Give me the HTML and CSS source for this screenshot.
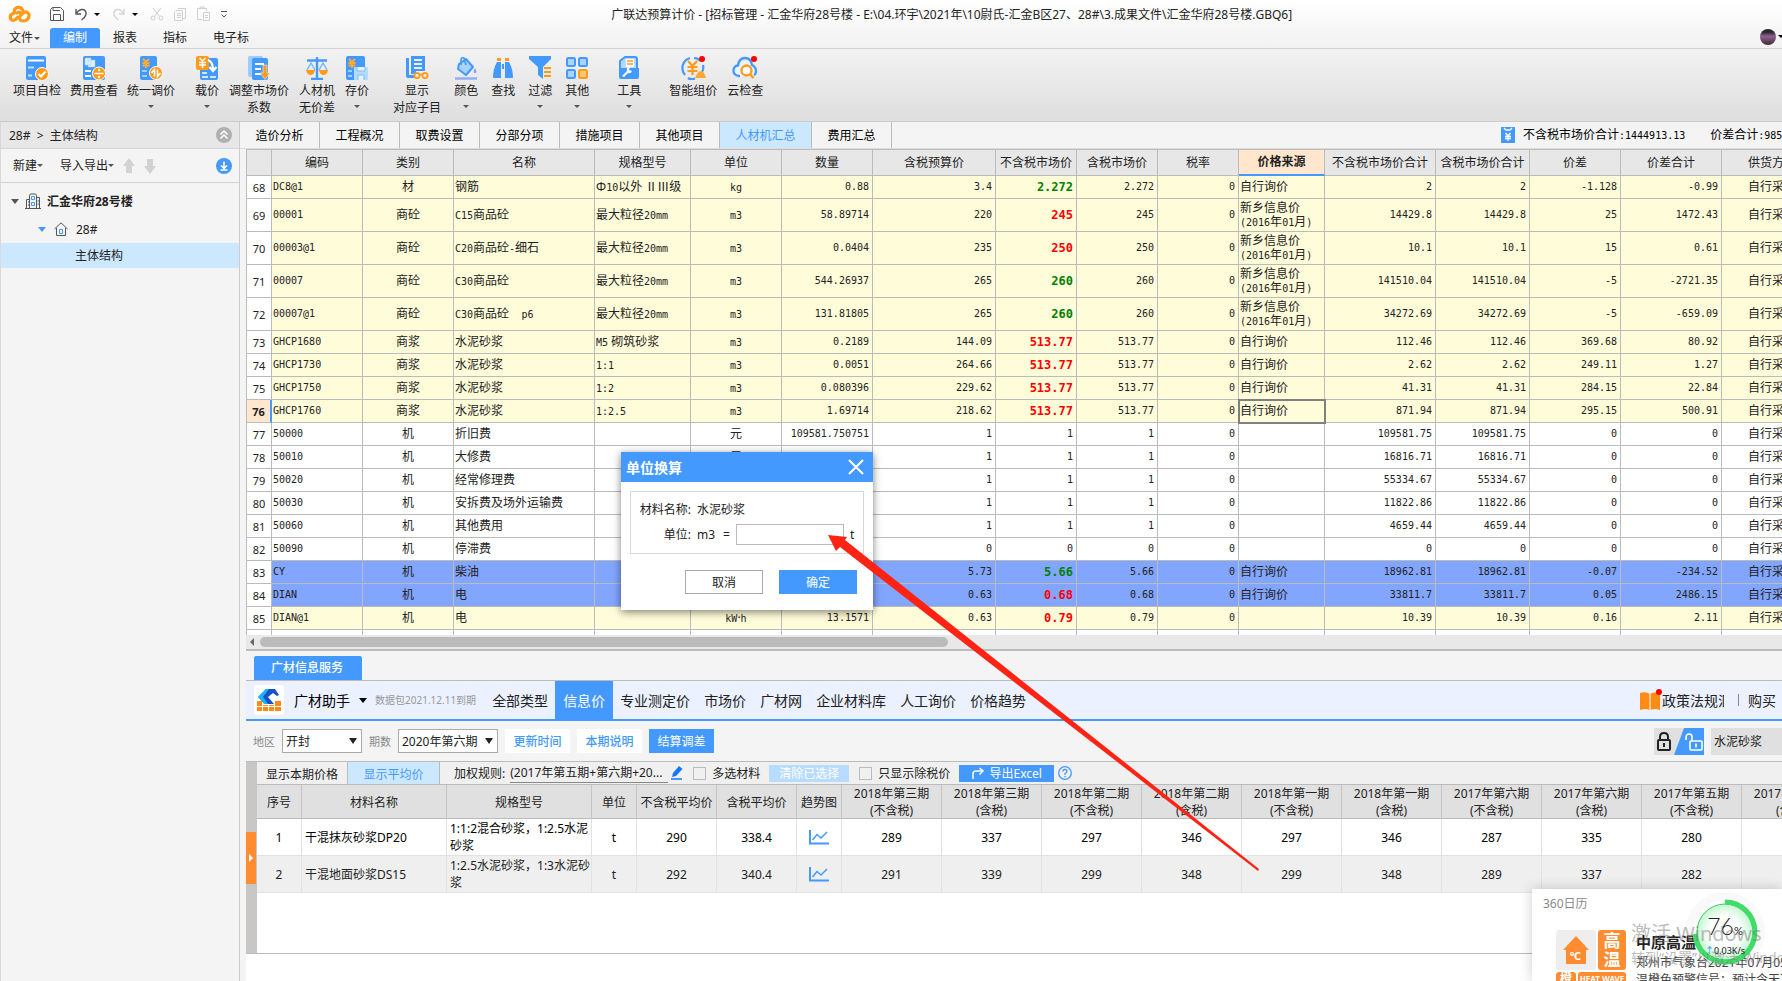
FILE: index.html
```html
<!DOCTYPE html>
<html lang="zh-CN">
<head>
    <meta charset="UTF-8">
    <meta name="viewport" content="width=device-width, initial-scale=1.0">
    <title>广联达预算计价</title>
    <link rel="stylesheet" href="styles.css">
</head>
<body>
    <!-- title bar + menu -->
    <header class="top">
        <div class="titlebar">
            <svg class="logo" width="23" height="18" viewBox="0 0 23 18"><path d="M9.500 12.500 7.500 14.500Q4.500 16.500 2.500 13.500 1.500 10 5 8.500L6.500 8Q5.500 4 9 2.500 13.500 1.500 14.500 5M13 15.500Q10 13 12.500 10.500L15.500 7.500Q19 5.500 21 9.500 21.500 14 17.500 15.500L15 16M9 8Q10.500 6 12.500 8" fill="none" stroke="#ff9b1a" stroke-width="3.200" stroke-linecap="round"/></svg>
            <div class="quick">
                <svg width="16" height="16" viewBox="0 0 16 16" fill="none" stroke="#555"><path d="M1.500 3.500 3.500 1.500H11.500L14.500 4.500V14.500H1.500ZM4 1.500V4.500H11M4.500 14V8.500H11.500V14"/></svg>
                <svg width="14" height="14" viewBox="0 0 14 14" fill="none" stroke="#555" stroke-width="1.400"><path d="M2 2V7H7M2 7Q5 2 9 2.500 12.500 3.500 12 7.500 11 11 7.500 13"/></svg>
                <i class="caret dark"></i>
                <svg width="14" height="14" viewBox="0 0 14 14" fill="none" stroke="#d6d6d6" stroke-width="1.400"><path d="M12 2V7H7M12 7Q9 2 5 2.500 1.500 3.500 2 7.500 3 11 6.500 13"/></svg>
                <i class="caret dark"></i>
                <svg width="14" height="14" viewBox="0 0 14 14" fill="none" stroke="#d0d0d0"><path d="M3 1 9.500 9.500M11 1 4.500 9.500"/><circle cx="3" cy="11" r="2"/><circle cx="11" cy="11" r="2"/></svg>
                <svg width="14" height="15" viewBox="0 0 14 15" fill="none" stroke="#d0d0d0"><path d="M4.500 1.500H12.500V11.500H10M2.500 3.500H9.500V13.500H1.500V4.500M4 6.500H8M4 8.500H8M4 10.500H8"/></svg>
                <svg width="15" height="16" viewBox="0 0 15 16" fill="none" stroke="#d0d0d0"><path d="M6 13.500H1.500V2.500H10.500V5M4 2.500V1H8V2.500M7.500 6.500H13.500V14.500H7.500ZM9 9.500H12M9 11.500H12"/></svg>
                <svg width="8" height="9" viewBox="0 0 8 9" fill="none" stroke="#555"><path d="M1 1.500H7M1.500 4.500 4 7 6.500 4.500"/></svg>
            </div>
            <div class="title">广联达预算计价 - [招标管理 - 汇金华府28号楼 - E:\04.环宇\2021年\10尉氏-汇金B区27、28#\3.成果文件\汇金华府28号楼.GBQ6]</div>
        </div>
        <nav class="menu">
            <a href="#" class="file">文件<i class="caret"></i></a>
            <a href="#" class="active">编制</a>
            <a href="#">报表</a>
            <a href="#">指标</a>
            <a href="#">电子标</a>
            <div class="user"><span class="avatar"></span><i class="caret dark"></i></div>
        </nav>
    </header>

    <div class="ribbon">
        <div class="group tight">
            <button>
                <svg width="24" height="24" viewBox="0 0 24 24"><rect x="1" width="20" height="24" rx="2" fill="#4499ff"/><path d="M3 4.500H19" stroke="#fff" stroke-width="2"/><path d="M3 11.500H9M3 19.500H7" stroke="#bfe0ff" stroke-width="2"/><circle cx="17" cy="18" r="6.500" fill="#ff9b1a" stroke="#fff"/><path d="M13.500 18 16 20.500 20.500 15.500" fill="none" stroke="#fff" stroke-width="2"/></svg>
                <span>项目自检</span>
            </button>
            <button>
                <svg width="24" height="24" viewBox="0 0 24 24"><rect x="1" width="22" height="24" rx="2" fill="#4499ff"/><path d="M3 2H9V9H3ZM6 4H13V11H6Z" fill="#e2f0ff" stroke="#9bc9ff" stroke-width=".500"/><path d="M3 15H9M3 20H9" stroke="#fff" stroke-width="2"/><circle cx="17" cy="17.500" r="6.500" fill="#ff9b1a" stroke="#fff"/><path d="M12.500 17.500H21.500" stroke="#fff" stroke-width="1.500"/><circle cx="17" cy="14" r="1.200" fill="#fff"/><circle cx="17" cy="21" r="1.200" fill="#fff"/></svg>
                <span>费用查看</span>
            </button>
            <button>
                <svg width="24" height="24" viewBox="0 0 24 24"><rect x="1" width="17" height="24" rx="2" fill="#4499ff"/><path d="M4 3 7 6 10 3M7 6V12M3.500 7H10.500M3.500 9.500H10.500" fill="none" stroke="#ffab33" stroke-width="2"/><path d="M3 15H8M3 20H8" stroke="#9bd0ff" stroke-width="2"/><circle cx="17" cy="17" r="6.500" fill="#ff9b1a" stroke="#fff"/><path d="M15.500 20.500V13.500L12.500 17M18.500 13.500V20.500L21.500 17" fill="none" stroke="#fff" stroke-width="1.600"/></svg>
                <span>统一调价</span><i class="caret"></i>
            </button>
        </div>
        <div class="group">
            <button>
                <svg width="24" height="24" viewBox="0 0 24 24"><rect x="5" y="2" width="18" height="22" rx="2" fill="#4499ff"/><rect x="1" width="13" height="14" rx="2" fill="#ff9b1a"/><path d="M4.500 2 7.500 5 10.500 2M7.500 5V12M4 6.500H11M4 9H11" fill="none" stroke="#fff" stroke-width="1.500"/><path d="M13 4Q18 6 18 14M14.500 11 18 15 21.500 11" fill="none" stroke="#fff" stroke-width="2.200"/><path d="M7 17H12M7 21H13M15 21H21" stroke="#fff" stroke-width="1.500"/></svg>
                <span>载价</span><i class="caret"></i>
            </button>
            <button>
                <svg width="24" height="24" viewBox="0 0 24 24"><rect x="1" width="15" height="21" rx="2" fill="#9bcbff"/><rect x="5" y="2" width="16" height="22" rx="2" fill="#4499ff"/><path d="M8 8H17M8 13H14M8 18H14" stroke="#fff" stroke-width="2"/><path d="M16 9H20V17H23L18 23.500 13 17H16Z" fill="#ff9b1a" stroke="#e8f3ff" stroke-width=".600"/></svg>
                <span>调整市场价<br>系数</span>
            </button>
            <button>
                <svg width="24" height="24" viewBox="0 0 24 24"><path d="M12 1V22M2 4.500H22M6 23H18" stroke="#4499ff" stroke-width="2.400" fill="none"/><path d="M2 14 6 7 10 14M14 14 18 7 22 14" fill="none" stroke="#79b7ff" stroke-width="1.500"/><path d="M1 14H10Q9 19 5.500 19 2 19 1 14ZM14 14H23Q22 19 18.500 19 15 19 14 14Z" fill="#ff9b1a"/></svg>
                <span>人材机<br>无价差</span>
            </button>
            <button>
                <svg width="24" height="24" viewBox="0 0 24 24"><rect x="1" width="19" height="24" rx="2" fill="#4499ff"/><path d="M4 3 7 6 10 3M7 6V12M3.500 7H10.500M3.500 9.500H10.500" fill="none" stroke="#ffab33" stroke-width="2"/><path d="M3 15H7M3 20H7" stroke="#9bd0ff" stroke-width="2"/><rect x="9" y="11" width="14" height="13" rx="1" fill="#b4dbff"/><path d="M12 11V15H20V11M13 24V19H19V24" fill="#e6f3ff" stroke="#7bbcff"/></svg>
                <span>存价</span><i class="caret"></i>
            </button>
        </div>
        <div class="group loose">
            <button>
                <svg width="24" height="24" viewBox="0 0 24 24"><path d="M1 2H4V19H10V22H3Q1 22 1 20ZM6 0H20V15H11V18H6Z" fill="#4499ff"/><path d="M9 4H17M9 8H17M9 12H17" stroke="#e2f0ff" stroke-width="1.800"/><g fill="none" stroke="#ff9b1a" stroke-width="1.800"><circle cx="12" cy="19.500" r="2.600"/><circle cx="20" cy="19.500" r="2.600"/><path d="M14 18.500H18"/></g></svg>
                <span>显示<br>对应子目</span>
            </button>
            <button>
                <svg width="24" height="24" viewBox="0 0 24 24"><path d="M5 8 12 3 19 11 12 19 4 13Z" fill="#a9d2ff" stroke="#4499ff" stroke-width="2" stroke-linejoin="round"/><path d="M7 9V4Q7 1 10 2L12 9" fill="none" stroke="#4499ff" stroke-width="1.600"/><path d="M21 12Q24 17 21 17 18 17 21 12Z" fill="#8d9ef5"/><path d="M1 22.500H23" stroke="#94adf5" stroke-width="2.500"/></svg>
                <span>颜色</span><i class="caret"></i>
            </button>
            <button>
                <svg width="24" height="24" viewBox="0 0 24 24"><path d="M6 6H10V22H2Q2 13 6 6ZM14 6H18Q22 13 22 22H14Z" fill="#4499ff"/><path d="M11 8H13V13H11Z" fill="#4499ff"/><path d="M6 3.500H10M14 3.500H18" stroke="#ff9b1a" stroke-width="3"/></svg>
                <span>查找</span>
            </button>
            <button>
                <svg width="24" height="24" viewBox="0 0 24 24"><path d="M1 0H23V3L15 11V23L10 19V11L1 3Z" fill="#4499ff"/><path d="M16 12H23M16 16H23M16 20H23" stroke="#ff9b1a" stroke-width="1.800"/></svg>
                <span>过滤</span><i class="caret"></i>
            </button>
            <button>
                <svg width="24" height="24" viewBox="0 0 24 24" fill="#a9d4ff" stroke="#4499ff" stroke-width="2"><rect x="2" y="2" width="8" height="8" rx="1.500"/><rect x="14" y="2" width="8" height="8" rx="1.500"/><rect x="2" y="14" width="8" height="8" rx="1.500"/><rect x="14" y="14" width="8" height="8" rx="1.500" fill="#ffc673" stroke="#ff9b1a"/></svg>
                <span>其他</span><i class="caret"></i>
            </button>
        </div>
        <div class="group apart">
            <button>
                <svg width="24" height="24" viewBox="0 0 24 24"><path d="M3 21V5L8 1H18Q20 1 20 3V12" fill="#b5d9ff" stroke="#4499ff" stroke-width="2"/><path d="M9 3H17V11H9Z" fill="#fff"/><path d="M10 5H16M10 8H16" stroke="#ff9b1a" stroke-width="1.500"/><path d="M2 12H22V21Q22 23 20 23H4Q2 23 2 21Z" fill="#4499ff"/><path d="M5 20 10 15Q9 11 13 11L12 14 15 15Q14 18 11 17L7 21Z" fill="#fff"/></svg>
                <span>工具</span><i class="caret"></i>
            </button>
        </div>
        <div class="group apart">
            <button>
                <svg width="26" height="24" viewBox="0 0 26 24"><path d="M5 19A10.500 10.500 0 0 1 10 2M14 2Q18 2 20 5M23 9Q24 13 22 16M8 22Q11 24 15 22.500" fill="none" stroke="#4499ff" stroke-width="2.200"/><path d="M8 5 12.500 10 17 5M12.500 10V19M7.500 11H17.500M7.500 15H17.500" fill="none" stroke="#ff9b1a" stroke-width="2.200"/><path d="M15 22Q18 15 21 15T26 22Z" fill="#ffa632"/><circle cx="22" cy="3" r="3" fill="#f00"/></svg>
                <span>智能组价</span>
            </button>
            <button>
                <svg width="26" height="24" viewBox="0 0 26 24"><path d="M8 20H7Q1 19 1.500 14 2 10 6 9.500 7 2 13 2 19 2 20 9 24 11 24 15 24 18 22 19" fill="#e9f3ff" stroke="#4499ff" stroke-width="2.300"/><circle cx="14.500" cy="14.500" r="5" fill="#fff" stroke="#ff9b1a" stroke-width="2.300"/><path d="M18 18 21.500 22" stroke="#ff9b1a" stroke-width="2.500"/><circle cx="22" cy="3" r="3" fill="#f00"/></svg>
                <span>云检查</span>
            </button>
        </div>
    </div>

    <div class="workspace">
        <aside class="side">
            <div class="crumb">
                <span>28#&nbsp; &gt;&nbsp; 主体结构</span>
                <svg width="16" height="16" viewBox="0 0 16 16"><circle cx="8" cy="8" r="8" fill="#b0b0b0"/><path d="M4.500 7.500 8 4 11.500 7.500M4.500 11.500 8 8 11.500 11.500" fill="none" stroke="#fff" stroke-width="1.500"/></svg>
            </div>
            <div class="side-tools">
                <button>新建<i class="caret"></i></button>
                <button>导入导出<i class="caret"></i></button>
                <svg width="12" height="16" viewBox="0 0 12 16"><path d="M6 0 12 8H9V15H3V8H0Z" fill="#d2d2d2"/></svg>
                <svg width="12" height="16" viewBox="0 0 12 16"><path d="M6 16 12 8H9V1H3V8H0Z" fill="#d2d2d2"/></svg>
                <svg class="end" width="16" height="16" viewBox="0 0 16 16"><circle cx="8" cy="8" r="8" fill="#4499ff"/><path d="M8 3.500V10M5 7.500 8 10.500 11 7.500M4.500 12H11.500" fill="none" stroke="#fff" stroke-width="1.500"/></svg>
            </div>
            <ul class="tree">
                <li class="root">
                    <i class="caret big"></i>
                    <svg width="16" height="16" viewBox="0 0 16 16" fill="none" stroke="#555"><path d="M0 15.500H16M1.500 15V6.500H4M4.500 15V2.500Q4.500 1 6 1H10Q11.500 1 11.500 2.500V15M12 4.500H14.500V15M3 9H4M3 12H4M12.500 8H14M12.500 11H14"/><path d="M6.500 3.500H9.500V6.500H6.500ZM6.500 9.500H9.500V12.500H6.500Z" stroke="#4499ff"/></svg>
                    <b>汇金华府28号楼</b>
                </li>
                <li class="child">
                    <i class="caret big blue"></i>
                    <svg width="14" height="14" viewBox="0 0 14 14" fill="none" stroke="#555"><path d="M.500 7 7 .800 13.500 7M2.500 6V13.500H11.500V6"/><path d="M5.500 7.500H8.500V11.500H5.500Z" stroke="#4499ff"/></svg>
                    <span>28#</span>
                </li>
                <li class="leaf">主体结构</li>
            </ul>
        </aside>

        <main class="main">
            <div class="tabs">
                <a href="#">造价分析</a>
                <a href="#">工程概况</a>
                <a href="#">取费设置</a>
                <a href="#">分部分项</a>
                <a href="#">措施项目</a>
                <a href="#">其他项目</a>
                <a href="#" class="active">人材机汇总</a>
                <a href="#">费用汇总</a>
                <div class="totals">
                    <svg width="14" height="16" viewBox="0 0 14 16"><path d="M0 0H14V16H0Z" fill="#4499ff"/><path d="M3 1 5 3H9L11 1M4.500 6 7 9 9.500 6M7 9V14M4 9.500H10M4 11.500H10" fill="none" stroke="#fff" stroke-width="1.300"/></svg>
                    <span>不含税市场价合计<span class="mono">:1444913.13</span></span>
                    <i class="bar"></i>
                    <span>价差合计<span class="mono">:985</span></span>
                </div>
            </div>

            <div class="grid-wrap">
                <table class="grid">
                    <colgroup>
                        <col class="w-no"><col class="w-91"><col class="w-91"><col class="w-name"><col class="w-96">
                        <col class="w-91"><col class="w-91"><col class="w-123"><col class="w-81"><col class="w-81">
                        <col class="w-81"><col class="w-86"><col class="w-111"><col class="w-94"><col class="w-91">
                        <col class="w-101"><col class="w-101">
                    </colgroup>
                    <thead>
                        <tr>
                            <th></th><th>编码</th><th>类别</th><th>名称</th><th>规格型号</th><th>单位</th><th>数量</th>
                            <th>含税预算价</th><th>不含税市场价</th><th>含税市场价</th><th>税率</th>
                            <th class="current">价格来源</th><th>不含税市场价合计</th><th>含税市场价合计</th>
                            <th>价差</th><th>价差合计</th><th>供货方式</th>
                        </tr>
                    </thead>
                    <tbody id="grid-body"></tbody>
                </table>
            </div>
            <div class="hscroll"><i class="arrow-left"></i><div class="thumb"></div></div>

            <section class="service">
                <div class="service-tab"><a href="#">广材信息服务</a></div>
                <div class="service-bar">
                    <svg class="brand" width="30" height="30" viewBox="0 0 30 30"><rect width="30" height="30" rx="3" fill="#fff"/><path d="M4 12 12 4H16L11 12 18 19H11Z" fill="#0a9bf0"/><path d="M12 4H21L25 10 23 11 19 8 14 12 20 19H14L8 12Z" fill="#1652c5"/><path d="M4 12 12 4H15L9 12 14 19H10Z" fill="#18b4f7"/><path d="M3 16H8V26H3ZM9 20H14V26H9ZM15 20H20V26H15ZM21 16H27V26H21Z" fill="#ff8a14"/><path d="M3 21.500H27" stroke="#fff"/></svg>
                    <span class="name">广材助手</span><i class="caret big dark"></i>
                    <span class="expire">数据包2021.12.11到期</span>
                    <nav>
                        <a href="#">全部类型</a>
                        <a href="#" class="active">信息价</a>
                        <a href="#">专业测定价</a>
                        <a href="#">市场价</a>
                        <a href="#">广材网</a>
                        <a href="#">企业材料库</a>
                        <a href="#">人工询价</a>
                        <a href="#">价格趋势</a>
                    </nav>
                    <div class="links">
                        <svg width="22" height="22" viewBox="0 0 22 22"><path d="M0 4Q5 2 10 5V21Q5 19 0 21ZM10 5Q15 2 20 4V21Q15 19 10 21Z" fill="#ff8a14"/><path d="M10 5V21" stroke="#ffc98f" stroke-width="2"/><circle cx="19" cy="3" r="3" fill="#f00"/></svg>
                        <a href="#" class="law">政策法规汇编</a>
                        <i class="bar"></i>
                        <a href="#">购买</a>
                    </div>
                </div>

                <div class="filters">
                    <label for="area">地区</label>
                    <div class="pick area"><select id="area"><option>开封</option></select></div>
                    <label for="period">期数</label>
                    <div class="pick period"><select id="period"><option>2020年第六期</option></select></div>
                    <button>更新时间</button>
                    <button>本期说明</button>
                    <button class="primary">结算调差</button>
                    <div class="search">
                        <svg width="50" height="27" viewBox="0 0 50 27"><path d="M0 0H50V27H0Z" fill="#e0e0e0"/><path d="M30 0H50V27H20Z" fill="#4499ff"/><g fill="none" stroke="#222" stroke-width="2"><rect x="4" y="12" width="12" height="10" rx="1"/><path d="M6 12V9Q6 5 10 5T14 9V12M10 15V19"/></g><g fill="none" stroke="#fff" stroke-width="1.600"><rect x="36" y="13" width="12" height="9" rx="1"/><path d="M38 13V9Q38 6 35 6T32 10V12M42 15.500V19.500"/></g></svg>
                        <input type="text" value="水泥砂浆" aria-label="材料名称">
                    </div>
                </div>

                <div class="list">
                    <div class="rail"><button aria-label="展开"></button></div>
                    <div class="list-main">
                        <div class="options">
                            <a href="#" class="sub">显示本期价格</a>
                            <a href="#" class="sub active">显示平均价</a>
                            <span class="rule-label">加权规则:</span>
                            <a href="#" class="rule">(2017年第五期+第六期+20...</a>
                            <svg width="12" height="14" viewBox="0 0 12 14"><path d="M1 11 2 7 8 0 11.500 3 5 10Z" fill="#1476ff"/><path d="M0 13H11" stroke="#1476ff" stroke-width="1.500"/></svg>
                            <label class="tick"><input type="checkbox">多选材料</label>
                            <button class="clear" disabled>清除已选择</button>
                            <label class="tick"><input type="checkbox">只显示除税价</label>
                            <button class="export"><svg width="12" height="12" viewBox="0 0 12 12" fill="none" stroke="#fff" stroke-width="1.500"><path d="M1 12V7Q1 4 4 4H10M7.500 1 11 4 7.500 7.500"/></svg>导出Excel</button>
                            <svg width="14" height="14" viewBox="0 0 14 14" fill="none" stroke="#4499ff" stroke-width="1.300"><circle cx="7" cy="7" r="6.300"/><path d="M5 5.500Q5 3.500 7 3.500T9 5.500Q9 6.500 7 7.500V9M7 10V11.300"/></svg>
                        </div>
                        <div class="prices-wrap">
                            <table class="prices">
                                <colgroup>
                                    <col class="w-45"><col class="w-145"><col class="w-145"><col class="w-45"><col class="w-80"><col class="w-80"><col class="w-45">
                                    <col span="10" class="w-100">
                                </colgroup>
                                <thead>
                                    <tr>
                                        <th>序号</th><th>材料名称</th><th>规格型号</th><th>单位</th><th>不含税平均价</th><th>含税平均价</th><th>趋势图</th>
                                        <th>2018年第三期<br>(不含税)</th><th>2018年第三期<br>(含税)</th>
                                        <th>2018年第二期<br>(不含税)</th><th>2018年第二期<br>(含税)</th>
                                        <th>2018年第一期<br>(不含税)</th><th>2018年第一期<br>(含税)</th>
                                        <th>2017年第六期<br>(不含税)</th><th>2017年第六期<br>(含税)</th>
                                        <th>2017年第五期<br>(不含税)</th><th>2017年第五期<br>(含税)</th>
                                    </tr>
                                </thead>
                                <tbody>
                                    <tr>
                                        <td>1</td><td class="l">干混抹灰砂浆DP20</td><td class="l">1:1:2混合砂浆，1:2.5水泥砂浆</td><td>t</td><td>290</td><td>338.4</td>
                                        <td><svg width="20" height="15" viewBox="0 0 20 15" fill="none" stroke="#4499ff" stroke-width="2"><path d="M1 0V13.500H20"/><path d="M3.500 10 8 4.500 12 8 18 2" stroke-width="1.500"/></svg></td>
                                        <td>289</td><td>337</td><td>297</td><td>346</td><td>297</td><td>346</td><td>287</td><td>335</td><td>280</td><td></td>
                                    </tr>
                                    <tr>
                                        <td>2</td><td class="l">干混地面砂浆DS15</td><td class="l">1:2.5水泥砂浆，1:3水泥砂浆</td><td>t</td><td>292</td><td>340.4</td>
                                        <td><svg width="20" height="15" viewBox="0 0 20 15" fill="none" stroke="#4499ff" stroke-width="2"><path d="M1 0V13.500H20"/><path d="M3.500 10 8 4.500 12 8 18 2" stroke-width="1.500"/></svg></td>
                                        <td>291</td><td>339</td><td>299</td><td>348</td><td>299</td><td>348</td><td>289</td><td>337</td><td>282</td><td></td>
                                    </tr>
                                </tbody>
                            </table>
                        </div>
                    </div>
                </div>
            </section>
        </main>
    </div>

    <!-- unit conversion dialog -->
    <form class="dialog">
        <div class="dialog-head">
            <span>单位换算</span>
            <button type="button" aria-label="关闭"><svg width="16" height="16" viewBox="0 0 16 16"><path d="M1 1 15 15M15 1 1 15" stroke="#fff" stroke-width="2"/></svg></button>
        </div>
        <div class="dialog-box">
            <div class="line"><span class="k">材料名称:</span><span>水泥砂浆</span></div>
            <div class="line"><label class="k" for="unit">单位:</label><span>m3</span><span class="eq">=</span><input type="text" id="unit"><span>t</span></div>
        </div>
        <div class="dialog-foot">
            <button type="button">取消</button>
            <button type="button" class="primary">确定</button>
        </div>
    </form>

    <!-- desktop popup -->
    <div class="popup">
        <div class="popup-name">360日历</div>
        <div class="popup-body">
            <div class="warn">
                <div class="house"><svg width="28" height="28" viewBox="0 0 28 28"><path d="M14 0 27 14H24V28H4V14H1Z" fill="#ff8c31"/></svg><span>℃</span></div>
                <div class="heat">高温</div>
                <div class="tag">橙</div>
                <div class="tag wave">HEAT WAVE</div>
            </div>
            <div class="news">
                <b>中原高温</b>
                <p>郑州市气象台2021年07月05</p>
                <p>温橙色预警信号：预计今天下</p>
            </div>
        </div>
        <div class="meter">
            <svg width="84" height="84" viewBox="0 0 84 84">
                <defs><radialGradient id="glow"><stop offset=".550" stop-color="#fff"/><stop offset="1" stop-color="#b9f5c8"/></radialGradient></defs>
                <circle cx="42" cy="42" r="40" fill="#888" fill-opacity=".05"/>
                <circle cx="42" cy="42" r="32" fill="#fff"/>
                <circle cx="42" cy="42" r="28" fill="url(#glow)" fill-opacity=".850" stroke="#2fd45f"/>
                <path d="M42 12A30 30 0 1 1 12 44" fill="none" stroke="#3fdc68" stroke-width="5"/>
            </svg>
            <div class="meter-text"><div class="pct">76<small>%</small></div><div class="speed"><i>↑</i>0.03K/s</div></div>
        </div>
        <div class="watermark"><p class="wm-big">激活 Windows</p><p>转到“设置”以激活 Windows。</p></div>
    </div>

    <svg class="pointer" width="432" height="337" viewBox="0 0 432 337"><path d="M0 0 19 2 17 5 431 334 430 336 12 12 8 16Z" fill="#ff2314"/></svg>

    <script src="script.js"></script>
</body>
</html>
```
FILE: styles.css
```css
* {
    box-sizing: border-box;
}

body {
    margin: 0;
    height: 100vh;
    overflow: hidden;
    position: relative;
    display: flex;
    flex-direction: column;
    font-family: "Noto Sans", "Noto Sans CJK SC", sans-serif;
    font-size: 12px;
    line-height: 17px;
    color: #222;
    background-color: #fff;
}

a {
    color: inherit;
    text-decoration: none;
}

button, input, select {
    font: inherit;
    color: inherit;
    margin: 0;
    padding: 0;
    border: none;
    border-radius: 0;
    background: none;
}

svg {
    display: block;
    flex: none;
}

p, ul {
    margin: 0;
    padding: 0;
}

.caret {
    flex: none;
    display: block;
    border: 3px solid transparent;
    border-top-color: #555;
    border-bottom: none;
}

.caret.dark {
    border-top-color: #000;
}

.caret.big {
    border-width: 5px 4px 0;
}

.caret.blue {
    border-top-color: #4499ff;
}

.mono {
    font-family: "DejaVu Sans Mono", monospace;
    font-size: 10px;
}

.bar {
    width: 1px;
    height: 12px;
    background-color: #8aa8d8;
}

/* Title and menu */
.top {
    flex: none;
    background: linear-gradient(#fff, #f2f2f2);
    border-bottom: 1px solid #d4d4d4;
}

.titlebar {
    height: 28px;
    display: flex;
    align-items: center;
    padding-left: 8px;
}

.quick {
    flex: 1;
    display: flex;
    align-items: center;
    gap: 9px;
    margin-left: 18px;
}

.quick .caret {
    margin: 0 3px 0 -3px;
}

.title {
    flex: none;
    width: 66%;
    white-space: nowrap;
}

.menu {
    height: 20px;
    display: flex;
    line-height: 20px;
}

.menu a {
    padding: 0 13px;
}

.menu .file {
    display: flex;
    align-items: center;
    gap: 1px;
    padding: 0 10px 0 9px;
}

.menu .active {
    background-color: #4499ff;
    color: #fff;
    border-radius: 3px 3px 0 0;
}

.user {
    margin-left: auto;
    display: flex;
    align-items: center;
    gap: 2px;
    margin-top: -3px;
    margin-right: -2px;
}

.avatar {
    width: 16px;
    height: 16px;
    border-radius: 50%;
    background: linear-gradient(#2b2530 20%, #8d6390 45%, #77527c 60%, #3e2a24);
}

/* Ribbon */
.ribbon {
    flex: none;
    height: 73px;
    display: flex;
    gap: 20px;
    padding: 7px 13px 0;
    background: linear-gradient(#f2f2f2, #dedede);
    border-bottom: 1px solid #ccc;
}

.group {
    display: flex;
    gap: 10px;
}

.group.tight {
    gap: 9px;
}

.group.loose {
    gap: 13px;
    margin-left: 4px;
}

.group.apart {
    margin-left: 8px;
}

.group button {
    display: flex;
    flex-direction: column;
    align-items: center;
    line-height: 17px;
    white-space: nowrap;
}

.group button > span {
    margin-top: 2px;
}

.group .caret {
    margin-top: 6px;
}

.workspace {
    flex: 1;
    min-height: 0;
    display: flex;
}

/* Project tree */
.side {
    flex: none;
    width: 240px;
    background-color: #f4f4f4;
    border-left: 1px solid #d8d8d8;
    border-right: 1px solid #ccc;
}

.crumb {
    height: 27px;
    display: flex;
    justify-content: space-between;
    align-items: center;
    padding: 0 7px 0 8px;
    background-color: #e7e7e7;
    border-bottom: 1px solid #d4d4d4;
}

.side-tools {
    height: 34px;
    display: flex;
    align-items: center;
    gap: 9px;
    padding: 0 7px 0 12px;
    border-bottom: 1px solid #d4d4d4;
}

.side-tools button {
    display: flex;
    align-items: center;
}

.side-tools button:first-child {
    margin-right: 8px;
}

.side-tools .end {
    margin-left: auto;
}

.tree {
    list-style: none;
    padding-top: 4px;
}

.tree li {
    height: 28px;
    display: flex;
    align-items: center;
    gap: 6px;
}

.tree .root {
    padding-left: 10px;
}

.tree .child {
    padding-left: 37px;
    gap: 8px;
}

.tree .leaf {
    height: 25px;
    padding-left: 74px;
    background-color: #cce8ff;
}

/* Tabs over the grid */
.main {
    flex: 1;
    min-width: 0;
    display: flex;
    flex-direction: column;
    background-color: #f4f4f4;
}

.tabs {
    flex: none;
    height: 27px;
    display: flex;
    line-height: 28px;
    color: #000;
    border-bottom: 1px solid #ddd;
    overflow: hidden;
}

.tabs a {
    flex: none;
    width: 80px;
    text-align: center;
    border-right: 1px solid #bbb;
}

.tabs .active {
    width: 92px;
    background-color: #cce8ff;
    color: #4499ff;
}

.totals {
    flex: none;
    width: 281px;
    margin-left: auto;
    display: flex;
    align-items: center;
    gap: 8px;
    white-space: nowrap;
}

.totals .bar {
    margin: 0 4px 0 5px;
}

/* Main grid */
.grid-wrap {
    flex: none;
    height: 486px;
    margin-left: 6px;
    overflow: hidden;
    background-color: #fff;
    border-top: 1px solid #bbb;
    border-left: 1px solid #bbb;
}

.grid, .prices {
    table-layout: fixed;
    border-collapse: separate;
    border-spacing: 0;
}

.grid {
    width: 1531px;
    line-height: 14px;
    color: #222;
}

.grid th, .grid td {
    height: 23px;
    padding: 0 1px;
    border-right: 1px solid #bbb;
    border-bottom: 1px solid #bbb;
    white-space: nowrap;
    overflow: hidden;
}

.grid th {
    height: 26px;
    padding: 0;
    font-weight: normal;
    background-color: #e7e7e7;
}

.grid th.current {
    font-weight: bold;
    background-color: #ffe6cc;
    border-bottom: 2px solid #4499ff;
}

.grid .tall td {
    height: 33px;
}

.grid td {
    background-color: #fffcd9;
}

.grid .plain td {
    background-color: #fff;
}

.grid .picked td {
    background-color: #82a5fe;
}

.grid td.no {
    font-size: 11px;
    text-align: center;
    padding: 2px 0 0;
    background-color: #fff;
}

.grid .here td.no {
    font-weight: bold;
    background-color: #ffe6cc;
    border-right: 2px solid #4499ff;
}

.grid .here td.source {
    outline: 2px solid #808080;
    outline-offset: -1px;
}

.grid .c {
    text-align: center;
}

.grid .r {
    text-align: right;
    padding-right: 3px;
}

.grid .up, .grid .down {
    font-size: 12px;
    font-weight: bold;
    color: #f00;
}

.grid .down {
    color: #008000;
}

.w-no { width: 25px; }
.w-81 { width: 81px; }
.w-86 { width: 86px; }
.w-91 { width: 91px; }
.w-94 { width: 94px; }
.w-96 { width: 96px; }
.w-101 { width: 101px; }
.w-111 { width: 111px; }
.w-123 { width: 123px; }
.w-name { width: 141px; }
.w-45 { width: 45px; }
.w-80 { width: 80px; }
.w-100 { width: 100px; }
.w-145 { width: 145px; }

.hscroll {
    flex: none;
    height: 16px;
    margin-left: 6px;
    padding: 0 4px;
    display: flex;
    align-items: center;
    gap: 6px;
    background-color: #e8e8e8;
    border-bottom: 2px solid #bbb;
}

.arrow-left {
    border: 4px solid transparent;
    border-right-color: #666;
    border-left: none;
}

.thumb {
    width: 45%;
    height: 10px;
    border-radius: 5px;
    background-color: #bbb;
}

/* Service panel */
.service {
    flex: 1;
    min-height: 0;
    margin-left: 6px;
    display: flex;
    flex-direction: column;
    background-color: #fff;
}

.service-tab {
    flex: none;
    height: 30px;
    padding: 5px 8px 0;
    background-color: #f4f4f4;
    border-bottom: 1px solid #bbb;
}

.service-tab a {
    display: block;
    width: 108px;
    padding-right: 2px;
    line-height: 24px;
    text-align: center;
    font-weight: 500;
    color: #fff;
    background-color: #4499ff;
    border-radius: 2px 2px 0 0;
}

.service-bar {
    flex: none;
    height: 40px;
    display: flex;
    align-items: center;
    padding-left: 8px;
    font-size: 14px;
    background-color: #ebf1ff;
    border-bottom: 2px solid #4499ff;
}

.service-bar .name {
    margin: 0 9px 0 10px;
    color: #000;
}

.expire {
    margin: 0 9px 0 8px;
    font-size: 10px;
    color: #999;
}

.service-bar nav {
    display: flex;
    line-height: 40px;
    height: 38px;
}

.service-bar nav a {
    padding: 0 7px;
}

.service-bar nav .active {
    padding: 0 8px;
    background-color: #4499ff;
    color: #fff;
}

.links {
    width: 142px;
    margin-left: auto;
    display: flex;
    align-items: center;
    white-space: nowrap;
}

.links .law {
    width: 62px;
    overflow: hidden;
}

.links .bar {
    margin: 0 9px 0 14px;
    background-color: #888;
}

.filters {
    flex: none;
    height: 41px;
    display: flex;
    align-items: center;
    gap: 7px;
    padding-left: 7px;
    background-color: #f4f4f4;
    border-bottom: 1px solid #bbb;
}

.filters label {
    font-size: 11px;
    color: #888;
}

.pick {
    position: relative;
    height: 24px;
}

.pick select {
    width: 100%;
    height: 24px;
    padding: 0 3px;
    appearance: none;
    background-color: #fff;
    border: 1px solid #aaa;
}

.pick::after {
    content: "";
    position: absolute;
    right: 5px;
    top: 9px;
    border: 4px solid transparent;
    border-top: 6px solid #222;
    border-bottom: none;
    pointer-events: none;
}

.pick.area {
    width: 80px;
}

.pick.period {
    width: 100px;
}

.filters button {
    width: 65px;
    height: 24px;
    font-weight: 500;
    color: #4499ff;
    background-color: #fff;
}

.filters .primary {
    font-weight: normal;
    color: #fff;
    background-color: #4499ff;
}

.search {
    width: 128px;
    margin-left: auto;
    display: flex;
    gap: 7px;
}

.search input {
    flex: 1;
    min-width: 0;
    height: 27px;
    padding: 0 3px;
    background-color: #e0e0e0;
}

.list {
    flex: 1;
    min-height: 0;
    display: flex;
    margin-bottom: 27px;
    border-bottom: 1px solid #bbb;
}

.rail {
    flex: none;
    width: 11px;
    padding-top: 70px;
    background-color: #c8c7c5;
}

.rail button {
    width: 10px;
    height: 52px;
    display: flex;
    align-items: center;
    justify-content: center;
    background-color: #ff8c31;
}

.rail button::after {
    content: "";
    border: 4px solid transparent;
    border-left-color: #fff;
    border-right: none;
}

.list-main {
    flex: 1;
    min-width: 0;
}

.options {
    height: 22px;
    display: flex;
    align-items: center;
    background-color: #f0f0f0;
}

.sub {
    width: 91px;
    height: 22px;
    line-height: 25px;
    text-align: center;
    border-right: 1px solid #bbb;
}

.sub.active {
    width: 92px;
    color: #4499ff;
    background-color: #cce8ff;
}

.rule-label {
    margin: 0 5px 0 14px;
}

.rule {
    width: 158px;
    margin-right: 3px;
    line-height: 18px;
    white-space: nowrap;
    border-bottom: 1px solid #888;
}

.tick {
    display: flex;
    align-items: center;
    gap: 6px;
    margin: 0 9px 0 10px;
}

.tick input {
    width: 13px;
    height: 13px;
    appearance: none;
    border: 1px solid #bbb;
}

.clear {
    width: 80px;
    height: 17px;
    color: #fff;
    background-color: #b8dcff;
}

.export {
    width: 95px;
    height: 17px;
    display: flex;
    align-items: center;
    justify-content: center;
    gap: 6px;
    margin-right: 4px;
    color: #fff;
    background-color: #4499ff;
}

.prices-wrap {
    overflow: hidden;
    border-top: 1px solid #bbb;
}

.prices {
    width: 1585px;
    text-align: center;
}

.prices th {
    height: 34px;
    padding: 0;
    font-weight: normal;
    line-height: 17px;
    white-space: nowrap;
    background-color: #e0e0e0;
    border-right: 1px solid #c4c4c4;
    box-shadow: inset 0 -1px #bbb;
}

.prices td {
    height: 37px;
    padding: 0;
    border-right: 1px solid #e2e2e2;
    border-bottom: 1px solid #e2e2e2;
    color: #000;
}

.prices tr:nth-child(even) td {
    background-color: #efefef;
    color: #222;
}

.prices .l {
    padding: 0 0 0 3px;
    text-align: left;
}

.prices svg {
    margin: 0 auto;
}

/* Dialog */
.dialog {
    position: absolute;
    left: 621px;
    top: 452px;
    width: 252px;
    height: 158px;
    background-color: #fff;
    box-shadow: 0 2px 8px rgba(0, 0, 0, 0.5);
}

.dialog-head {
    height: 30px;
    display: flex;
    justify-content: space-between;
    align-items: center;
    padding: 0 9px 0 5px;
    font-size: 14px;
    font-weight: bold;
    color: #fff;
    background-color: #4499ff;
}

.dialog-box {
    height: 63px;
    margin: 9px 9px 0;
    padding-top: 6px;
    border: 1px solid #d8d8d8;
}

.line {
    height: 22px;
    display: flex;
    align-items: center;
    gap: 6px;
}

.line + .line {
    margin-top: 3px;
}

.line .k {
    width: 60px;
    text-align: right;
}

.line .eq {
    margin-left: 2px;
}

.line input {
    width: 108px;
    height: 21px;
    border: 1px solid #bbb;
}

.dialog-foot {
    display: flex;
    justify-content: flex-end;
    gap: 16px;
    padding: 16px 16px 0;
}

.dialog-foot button {
    width: 78px;
    height: 24px;
    border: 1px solid #aaa;
}

.dialog-foot .primary {
    color: #fff;
    background-color: #4499ff;
    border-color: #4499ff;
}

/* Desktop popup */
.popup {
    position: absolute;
    right: 0;
    bottom: 0;
    width: 250px;
    height: 92px;
    overflow: hidden;
    background-color: #fff;
    box-shadow: 0 0 12px rgba(0, 0, 0, 0.2);
}

.popup-name {
    padding: 6px 11px 0;
    color: #888;
}

.popup-body {
    display: flex;
    gap: 10px;
    padding: 18px 0 0 24px;
}

.warn {
    flex: none;
    display: flex;
    flex-wrap: wrap;
    gap: 2px;
    width: 70px;
}

.warn div {
    border-radius: 3px;
    font-weight: bold;
    color: #fff;
    background-color: #ff8c31;
    text-align: center;
}

.warn .house {
    width: 40px;
    height: 40px;
    position: relative;
    padding: 6px;
    background-color: #eee;
}

.house span {
    position: absolute;
    left: 14px;
    top: 17px;
    font-size: 11px;
}

.warn .heat {
    width: 28px;
    height: 40px;
    font-size: 17px;
    line-height: 19px;
    padding: 1px 5px;
}

.warn .tag {
    width: 20px;
    height: 20px;
    line-height: 14px;
}

.warn .wave {
    width: 48px;
    font-size: 8px;
    white-space: nowrap;
}

.news {
    white-space: nowrap;
}

.news b {
    display: block;
    font-size: 15px;
    line-height: 24px;
}

.news p {
    line-height: 17px;
    color: #444;
}

.meter {
    position: absolute;
    left: 151px;
    top: 1px;
}

.meter-text {
    position: absolute;
    left: 0;
    top: 24px;
    width: 84px;
    text-align: center;
}

.pct {
    font-family: Lato, sans-serif;
    font-weight: 300;
    font-size: 23px;
    line-height: 24px;
}

.pct small {
    font-size: 11px;
    font-weight: normal;
}

.speed {
    font-size: 9px;
    line-height: 16px;
}

.speed i {
    font-style: normal;
    color: #1e90ff;
}

.watermark {
    position: absolute;
    left: 99px;
    top: 31px;
    white-space: nowrap;
    font-size: 14px;
    line-height: 19px;
    color: rgba(120, 120, 120, 0.5);
}

.wm-big {
    font-size: 20px;
    line-height: 28px;
}

.pointer {
    position: absolute;
    left: 828px;
    top: 535px;
    pointer-events: none;
}
```
FILE: script.js
```js
// no, code, type, name, spec, unit, qty, budget, market, market with tax, source, total, total with tax, diff, diff total, row class, price class
const xx = '新乡信息价<br>(2016年01月)';
const zx = '自行询价';
const rows = [
    [68, 'DC8@1', '材', '钢筋', 'Φ10以外 ⅡⅢ级', 'kg', '0.88', '3.4', '2.272', '2.272', zx, '2', '2', '-1.128', '-0.99', '', 'down'],
    [69, '00001', '商砼', 'C15商品砼', '最大粒径20mm', 'm3', '58.89714', '220', '245', '245', xx, '14429.8', '14429.8', '25', '1472.43', 'tall', 'up'],
    [70, '00003@1', '商砼', 'C20商品砼-细石', '最大粒径20mm', 'm3', '0.0404', '235', '250', '250', xx, '10.1', '10.1', '15', '0.61', 'tall', 'up'],
    [71, '00007', '商砼', 'C30商品砼', '最大粒径20mm', 'm3', '544.26937', '265', '260', '260', xx, '141510.04', '141510.04', '-5', '-2721.35', 'tall', 'down'],
    [72, '00007@1', '商砼', 'C30商品砼&nbsp;&nbsp;&nbsp; p6', '最大粒径20mm', 'm3', '131.81805', '265', '260', '260', xx, '34272.69', '34272.69', '-5', '-659.09', 'tall', 'down'],
    [73, 'GHCP1680', '商浆', '水泥砂浆', 'M5 砌筑砂浆', 'm3', '0.2189', '144.09', '513.77', '513.77', zx, '112.46', '112.46', '369.68', '80.92', '', 'up'],
    [74, 'GHCP1730', '商浆', '水泥砂浆', '1:1', 'm3', '0.0051', '264.66', '513.77', '513.77', zx, '2.62', '2.62', '249.11', '1.27', '', 'up'],
    [75, 'GHCP1750', '商浆', '水泥砂浆', '1:2', 'm3', '0.080396', '229.62', '513.77', '513.77', zx, '41.31', '41.31', '284.15', '22.84', '', 'up'],
    [76, 'GHCP1760', '商浆', '水泥砂浆', '1:2.5', 'm3', '1.69714', '218.62', '513.77', '513.77', zx, '871.94', '871.94', '295.15', '500.91', 'here', 'up'],
    [77, '50000', '机', '折旧费', '', '元', '109581.750751', '1', '1', '1', '', '109581.75', '109581.75', '0', '0', 'plain', ''],
    [78, '50010', '机', '大修费', '', '元', '', '1', '1', '1', '', '16816.71', '16816.71', '0', '0', 'plain', ''],
    [79, '50020', '机', '经常修理费', '', '', '', '1', '1', '1', '', '55334.67', '55334.67', '0', '0', 'plain', ''],
    [80, '50030', '机', '安拆费及场外运输费', '', '', '', '1', '1', '1', '', '11822.86', '11822.86', '0', '0', 'plain', ''],
    [81, '50060', '机', '其他费用', '', '', '', '1', '1', '1', '', '4659.44', '4659.44', '0', '0', 'plain', ''],
    [82, '50090', '机', '停滞费', '', '', '', '0', '0', '0', '', '0', '0', '0', '0', 'plain', ''],
    [83, 'CY', '机', '柴油', '', '', '', '5.73', '5.66', '5.66', zx, '18962.81', '18962.81', '-0.07', '-234.52', 'picked', 'down'],
    [84, 'DIAN', '机', '电', '', '', '', '0.63', '0.68', '0.68', zx, '33811.7', '33811.7', '0.05', '2486.15', 'picked', 'up'],
    [85, 'DIAN@1', '机', '电', '', 'kW·h', '13.1571', '0.63', '0.79', '0.79', '', '10.39', '10.39', '0.16', '2.11', '', 'up']
];

// latin runs inside a chinese cell use the fixed-width face
function mixed(text) {
    return text.replace(/<br>|&nbsp;|[\w().:@-]+/g, m => m[0] === '<' || m[0] === '&' ? m : `<span class="mono">${m}</span>`);
}

function num(value, cls = '') {
    return `<td class="r mono ${cls}">${value}</td>`;
}

document.getElementById('grid-body').innerHTML = rows.map(r => `
    <tr class="${r[15]}">
        <td class="no">${r[0]}</td><td class="mono">${r[1]}</td><td class="c">${r[2]}</td>
        <td>${mixed(r[3])}</td><td>${mixed(r[4])}</td><td class="c">${mixed(r[5])}</td>
        ${num(r[6])}${num(r[7])}${num(r[8], r[16])}${num(r[9])}${num('0')}
        <td class="source">${mixed(r[10])}</td>
        ${num(r[11])}${num(r[12])}${num(r[13])}${num(r[14])}
        <td class="c">自行采购</td>
    </tr>`).join('') + '<tr class="plain">' + '<td></td>'.repeat(17) + '</tr>';
```
